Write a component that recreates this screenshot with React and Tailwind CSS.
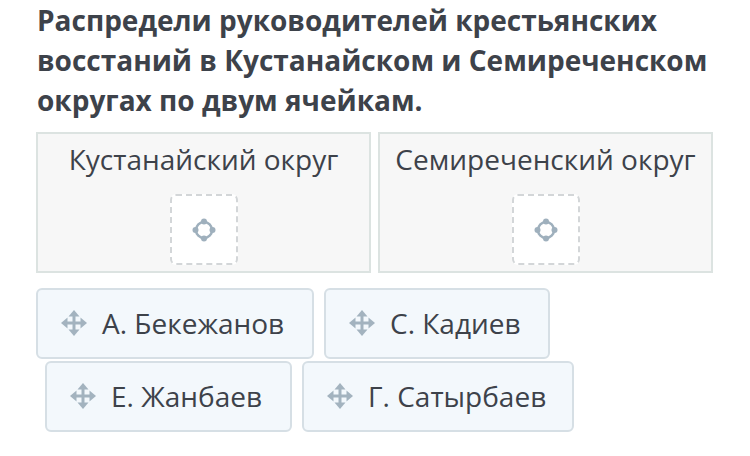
import React from "react";

const font = { fontFamily: '"Open Sans", "Noto Sans", sans-serif' };

// Four-way arrow shown on draggable chips
const MoveIcon = () => (
  <svg width="28" height="28" viewBox="0 0 28 28" className="shrink-0">
    <g fill="#a3b3bf">
      <rect x="12.5" y="5" width="3" height="18" />
      <rect x="5" y="12.5" width="18" height="3" />
      <polygon points="14,1 19.5,7.5 8.5,7.5" />
      <polygon points="14,27 19.5,20.5 8.5,20.5" />
      <polygon points="1,14 7.5,8.5 7.5,19.5" />
      <polygon points="27,14 20.5,8.5 20.5,19.5" />
    </g>
  </svg>
);

// Target marker inside empty drop zones
const TargetIcon = () => (
  <svg width="26" height="26" viewBox="0 0 26 26">
    <circle cx="13" cy="13" r="8" fill="none" stroke="#9fb0bd" strokeWidth="2.5" />
    <g fill="#9fb0bd">
      <circle cx="13" cy="4.5" r="3" />
      <circle cx="13" cy="21.5" r="3" />
      <circle cx="4.5" cy="13" r="3" />
      <circle cx="21.5" cy="13" r="3" />
    </g>
  </svg>
);

const Cell = ({ title }) => (
  <div className="flex h-[141px] w-[335px] flex-col items-center border-2 border-[#dce3e1] bg-[#f7f7f7]">
    <div className="mt-[6px] text-[28px] leading-[38px] text-[#3d424a]">{title}</div>
    <div className="mt-[16px] flex h-[71px] w-[68px] items-center justify-center rounded-md border-2 border-dashed border-[#d3d6d8] bg-white">
      <TargetIcon />
    </div>
  </div>
);

const Chip = ({ label, width }) => (
  <div
    className={`flex h-[71px] items-center gap-[14px] rounded-md border-2 border-[#d6dfe5] bg-[#f3f8fc] pb-[2px] pl-[22px] text-[28px] text-[#3d424a] ${width}`}
  >
    <MoveIcon />
    <span>{label}</span>
  </div>
);

export default function App() {
  return (
    <div className="h-[456px] w-[750px] overflow-hidden bg-white" style={font}>
      <h1 className="pl-[37px] pr-[20px] text-[28px] font-bold leading-[40px] text-[#3d424a]">
        Распредели руководителей крестьянских восстаний в Кустанайском и Семиреченском округах по двум ячейкам.
      </h1>

      {/* Drop cells */}
      <div className="mt-[12px] flex gap-[7px] pl-[36px]">
        <Cell title="Кустанайский округ" />
        <Cell title="Семиреченский округ" />
      </div>

      {/* Draggable answers */}
      <div className="mt-[15px] flex flex-col gap-[2px]">
        <div className="flex gap-[10px] pl-[36px]">
          <Chip label="А. Бекежанов" width="w-[278px]" />
          <Chip label="С. Кадиев" width="w-[226px]" />
        </div>
        <div className="flex gap-[10px] pl-[45px]">
          <Chip label="Е. Жанбаев" width="w-[247px]" />
          <Chip label="Г. Сатырбаев" width="w-[272px]" />
        </div>
      </div>
    </div>
  );
}
